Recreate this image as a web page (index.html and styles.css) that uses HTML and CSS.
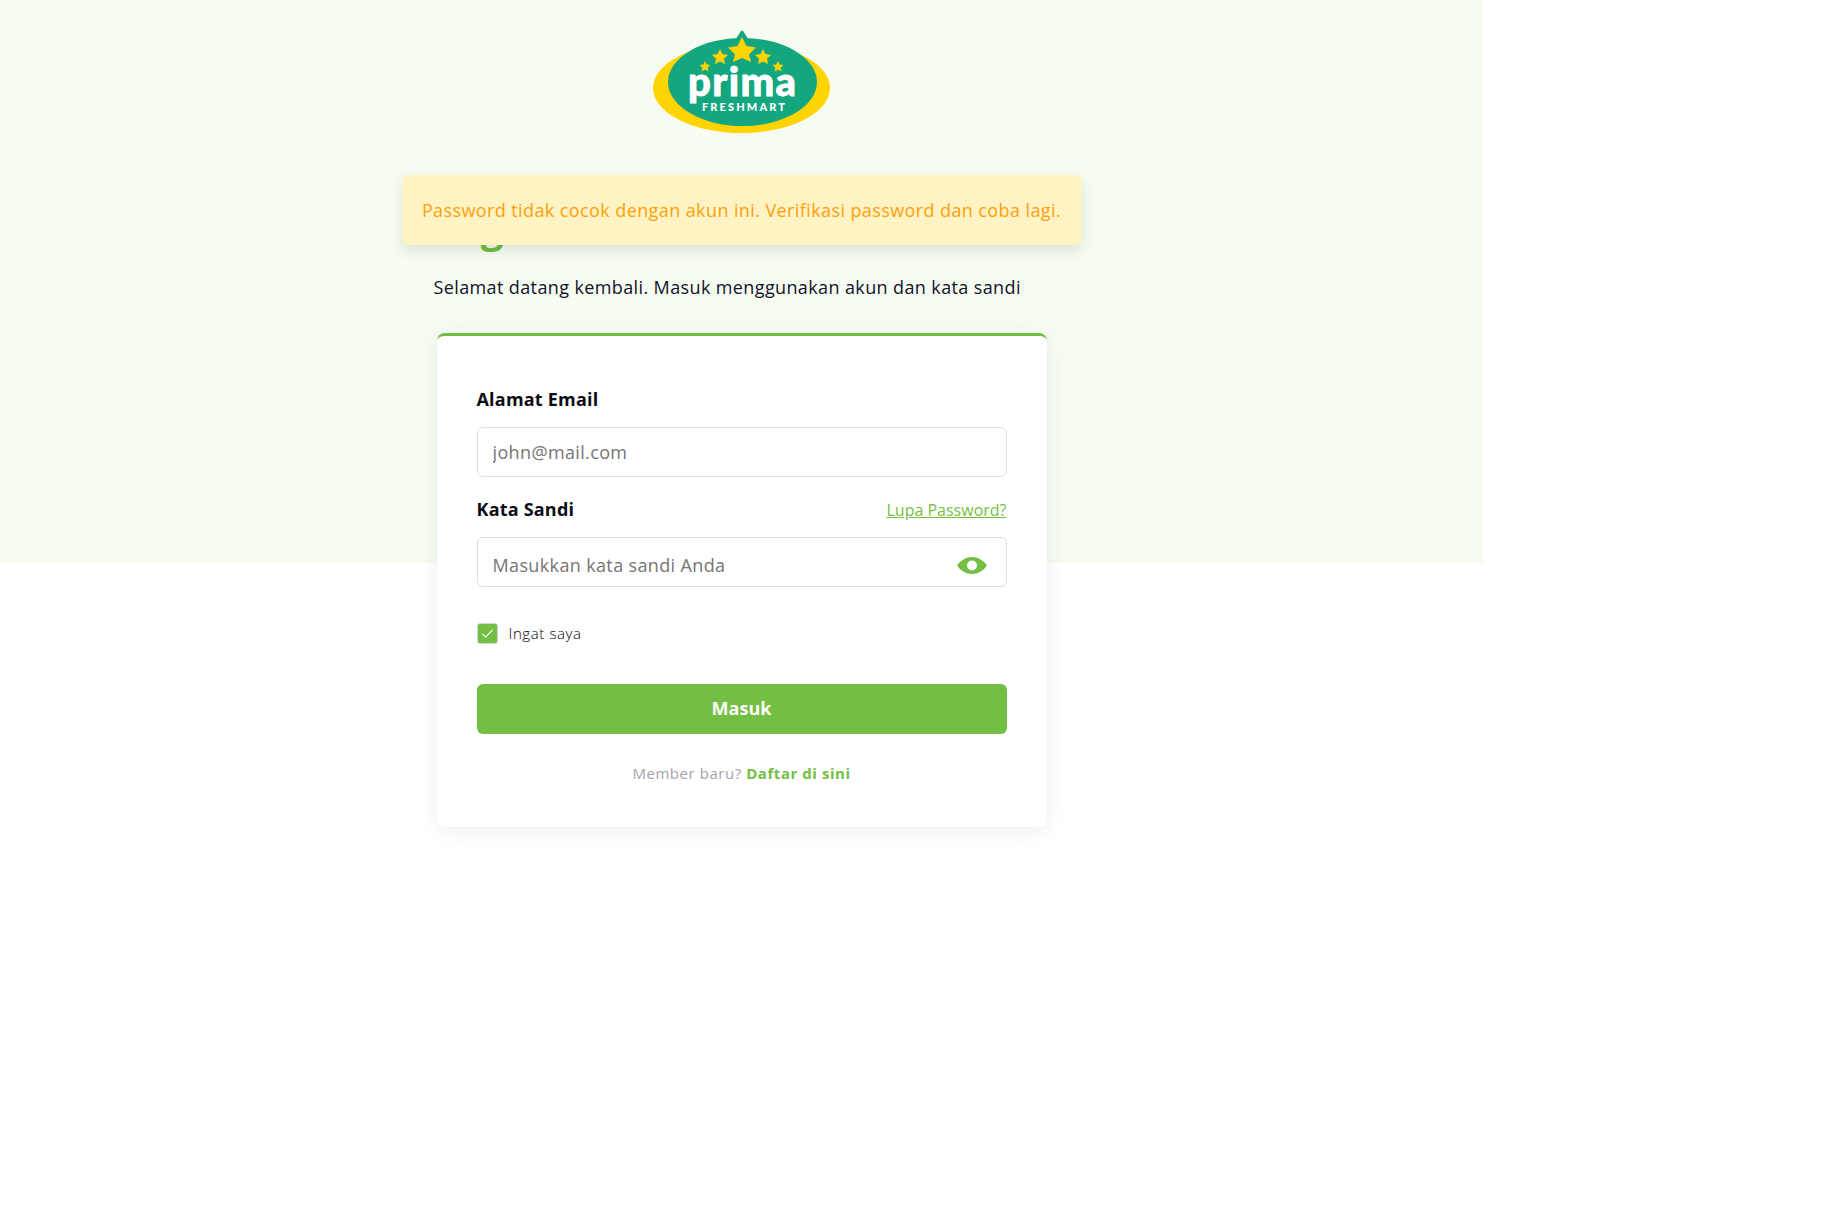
FILE: index.html
```html
<!DOCTYPE html>
<html lang="id">
<head>
    <meta charset="UTF-8">
    <meta name="viewport" content="width=device-width, initial-scale=1.0">
    <link rel="stylesheet" href="styles.css">
    <title>Masuk - Prima Freshmart</title>
</head>
<body>
    <div class="page">
        <svg class="logo" viewBox="653 30 177 103" width="177" height="103">
            <ellipse cx="741.5" cy="88" rx="88.5" ry="45" fill="#ffd400"/>
            <ellipse cx="742.5" cy="82" rx="74.5" ry="44" fill="#13a67f"/>
            <polygon points="742,32 749,43 764,45 753,55 756,68 742,62 728,68 731,55 720,45 735,43" fill="#13a67f" stroke="#13a67f" stroke-width="3" stroke-linejoin="round"/>
            <polygon points="742,37 746.5,46 756,47.5 749,54.5 751,62 742,58 733,62 735,54.5 728,47.5 737.5,46" fill="#ffd400"/>
            <polygon points="720,49 722.4,54 728,54.8 724,58.7 725,64 720,61.5 715,64 716,58.7 712,54.8 717.6,54" fill="#ffd400"/>
            <polygon points="763,49 765.4,54 771,54.8 767,58.7 768,64 763,61.5 758,64 759,58.7 755,54.8 760.6,54" fill="#ffd400"/>
            <polygon points="705,61 706.7,64.4 710.5,65 707.8,67.6 708.4,71.4 705,69.6 701.6,71.4 702.2,67.6 699.5,65 703.3,64.4" fill="#ffd400"/>
            <polygon points="778,61 779.7,64.4 783.5,65 780.8,67.6 781.4,71.4 778,69.6 774.6,71.4 775.2,67.6 772.5,65 776.3,64.4" fill="#ffd400"/>
            <text class="logo-name" x="688" y="96" textLength="108">prima</text>
            <text class="logo-sub" x="702" y="111" textLength="83">FRESHMART</text>
        </svg>

        <div class="login-column">
            <h1 class="login-title">Login</h1>
            <p class="login-subtitle">Selamat datang kembali. Masuk menggunakan akun dan kata sandi</p>

            <form class="card">
                <label class="field-label" for="email">Alamat Email</label>
                <input class="field-input" type="text" id="email" placeholder="john@mail.com">

                <div class="password-head">
                    <label class="field-label" for="password">Kata Sandi</label>
                    <a class="forgot-link" href="#">Lupa Password?</a>
                </div>
                <div class="password-wrap">
                    <input class="field-input password-input" type="password" id="password" placeholder="Masukkan kata sandi Anda">
                    <svg class="eye-icon" viewBox="0 0 30 17" width="30" height="17">
                        <path d="M0 8.5C4 3 9 0 15 0s11 3 15 8.5C26 14 21 17 15 17S4 14 0 8.5z" fill="#72bf44"/>
                        <circle cx="15" cy="8.5" r="5" fill="#fff"/>
                    </svg>
                </div>

                <div class="remember">
                    <span class="checkbox">
                        <svg viewBox="0 0 21 21" width="21" height="21">
                            <path d="M5 11l3.5 3.5L16 6.5" fill="none" stroke="#fff" stroke-width="1.3"/>
                        </svg>
                    </span>
                    <span class="remember-text">Ingat saya</span>
                </div>

                <button class="submit-btn" type="button">Masuk</button>

                <p class="register">Member baru? <a href="#">Daftar di sini</a></p>
            </form>

            <div class="alert">Password tidak cocok dengan akun ini. Verifikasi password dan coba lagi.</div>
        </div>
    </div>
</body>
</html>
```

FILE: styles.css
```css
body {
    margin: 0;
    font-family: 'Open Sans', sans-serif;
    background-color: #fff;
    color: #12122a;
}

.page {
    width: 1483px;
    padding: 30px 0 60px;
    background: linear-gradient(#f6fcf1, #f6fcf1) no-repeat;
    background-size: 100% 563px;
}

.logo {
    display: block;
    margin: 0 auto;
}

.logo-name {
    font-family: 'Lato', sans-serif;
    font-weight: 900;
    font-size: 40px;
    fill: #fff;
    stroke: #fff;
    stroke-width: 0.8px;
}

.logo-sub {
    font-family: 'Lato', sans-serif;
    font-weight: 900;
    font-size: 11px;
    fill: #fff;
}

.login-column {
    position: relative;
    width: 616px;
    margin: 0 auto;
    padding-top: 67px;
}

.login-title {
    margin: 0;
    font-size: 40px;
    line-height: 56px;
    font-weight: 700;
    color: #72bf44;
}

.login-subtitle {
    margin: 17px 0 0;
    font-size: 18px;
    line-height: 28px;
    letter-spacing: 0.38px;
}

.card {
    margin: 32px 3px 0;
    padding: 51px 40px 43px;
    background-color: #fff;
    border-top: 3px solid #72bf44;
    border-radius: 8px;
    box-shadow: 0 4px 20px rgba(0, 0, 0, 0.07);
}

.field-label {
    display: block;
    font-size: 18px;
    line-height: 25px;
    font-weight: 700;
    letter-spacing: 0.2px;
    color: #0b0b14;
}

.field-input {
    display: block;
    width: 100%;
    height: 50px;
    margin-top: 15px;
    padding: 0 15px;
    box-sizing: border-box;
    font-family: inherit;
    font-size: 18px;
    letter-spacing: 0.36px;
    border: 1px solid #dedede;
    border-radius: 6px;
    background-color: #fff;
    outline: none;
}

.field-input::placeholder {
    color: #757575;
}

.password-input {
    padding-top: 5px;
}

.password-head {
    display: flex;
    justify-content: space-between;
    align-items: center;
    margin-top: 20px;
}

.forgot-link {
    font-size: 16px;
    color: #72bf44;
}

.password-wrap {
    position: relative;
}

.eye-icon {
    position: absolute;
    right: 20px;
    top: 20px;
}

.remember {
    display: flex;
    align-items: center;
    gap: 11px;
    height: 21px;
    margin-top: 36px;
}

.checkbox {
    width: 21px;
    height: 21px;
    box-sizing: border-box;
    background-color: #72bf44;
    border: 1px solid #d5d5d5;
    border-radius: 3px;
    display: flex;
    align-items: center;
    justify-content: center;
}

.remember-text {
    padding-bottom: 2px;
    font-size: 15px;
    font-weight: 300;
    color: #000;
    letter-spacing: 0.6px;
}

.submit-btn {
    display: block;
    width: 100%;
    height: 50px;
    margin-top: 40px;
    padding: 0 0 2px;
    font-family: inherit;
    font-size: 18px;
    font-weight: 700;
    color: #fff;
    background-color: #72bf44;
    border: none;
    border-radius: 6px;
}

.register {
    margin: 28px 0 0;
    font-size: 15px;
    line-height: 22px;
    text-align: center;
    letter-spacing: 0.55px;
    color: #a3a3ad;
}

.register a {
    font-weight: 700;
    color: #72bf44;
    text-decoration: none;
}

.alert {
    position: absolute;
    top: 42px;
    left: -32px;
    width: 680px;
    height: 70px;
    display: flex;
    align-items: center;
    justify-content: center;
    box-sizing: border-box;
    font-size: 18px;
    letter-spacing: 0.4px;
    color: #ff9f0a;
    background-color: #fff3c4;
    border-radius: 6px;
    box-shadow: 0 6px 14px rgba(0, 0, 0, 0.1);
}
```
